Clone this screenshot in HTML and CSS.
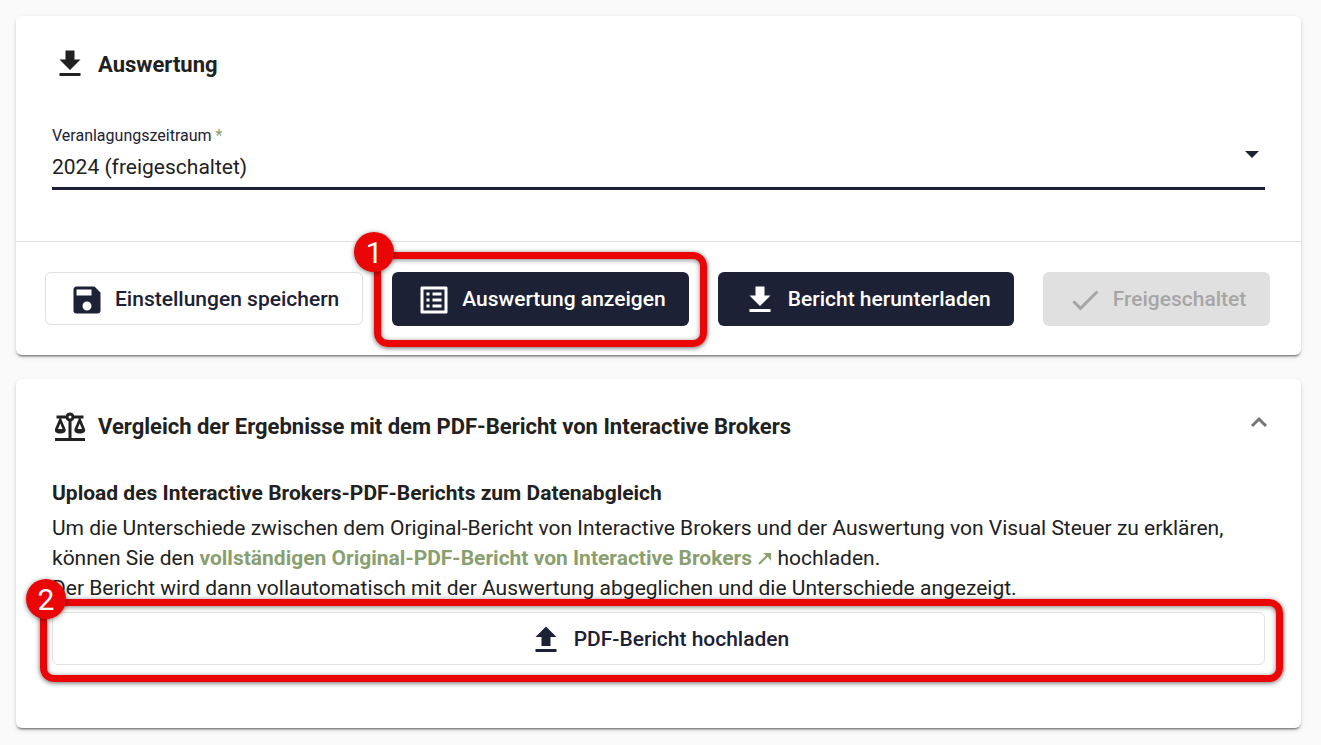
FILE: index.html
```html
<!DOCTYPE html>
<html lang="de">

<head>
    <meta charset="UTF-8">
    <meta name="viewport" content="width=device-width, initial-scale=1.0">
    <title>Auswertung</title>
    <link rel="stylesheet" href="styles.css">
</head>

<body>
    <main class="page">
        <section class="card">
            <div class="card-header">
                <svg class="icon" viewBox="0 0 24 24"><path d="M5,20H19V18H5M19,9H15V3H9V9H5L12,16L19,9Z"/></svg>
                <h2>Auswertung</h2>
            </div>

            <div class="field">
                <label for="period">Veranlagungszeitraum <span class="required">*</span></label>
                <div class="select-wrap">
                    <select id="period" name="period" required>
                        <option selected>2024 (freigeschaltet)</option>
                    </select>
                    <svg class="select-arrow" viewBox="0 0 14 7"><path d="M0,0H14L7,7Z"/></svg>
                </div>
            </div>

            <div class="actions">
                <button type="button" class="btn btn-outline">
                    <svg class="icon" viewBox="0 0 24 24"><path d="M15,9H5V5H15M12,19A3,3 0 0,1 9,16A3,3 0 0,1 12,13A3,3 0 0,1 15,16A3,3 0 0,1 12,19M17,3H5C3.89,3 3,3.9 3,5V19A2,2 0 0,0 5,21H19A2,2 0 0,0 21,19V7L17,3Z"/></svg>
                    <span>Einstellungen speichern</span>
                </button>
                <div class="step step-show">
                    <button type="button" class="btn btn-dark">
                        <svg class="icon" viewBox="0 0 24 24"><path d="M19 5v14H5V5h14m1.1-2H3.9c-.5 0-.9.4-.9.9v16.2c0 .4.4.9.9.9h16.2c.4 0 .9-.5.9-.9V3.9c0-.5-.5-.9-.9-.9zM11 7h6v2h-6V7zm0 4h6v2h-6v-2zm0 4h6v2h-6zM7 7h2v2H7zm0 4h2v2H7zm0 4h2v2H7z"/></svg>
                        <span>Auswertung anzeigen</span>
                    </button>
                    <div class="marker"></div>
                    <span class="badge">1</span>
                </div>
                <button type="button" class="btn btn-dark">
                    <svg class="icon" viewBox="0 0 24 24"><path d="M5,20H19V18H5M19,9H15V3H9V9H5L12,16L19,9Z"/></svg>
                    <span>Bericht herunterladen</span>
                </button>
                <button type="button" class="btn btn-disabled" disabled>
                    <svg class="icon" viewBox="0 0 24 24"><path d="M21,7L9,19L3.5,13.5L4.91,12.09L9,16.17L19.59,5.59L21,7Z"/></svg>
                    <span>Freigeschaltet</span>
                </button>
            </div>
        </section>

        <section class="card">
            <div class="card-header collapsible">
                <svg class="icon" viewBox="0 0 24 24"><path d="M12,3C10.73,3 9.6,3.8 9.18,5H3V7H4.95L2,14C1.53,16 3,17 5.5,17C8,17 9.56,16 9,14L6.05,7H9.17C9.5,7.85 10.15,8.5 11,8.83V20H2V22H22V20H13V8.82C13.85,8.5 14.5,7.85 14.82,7H17.95L15,14C14.53,16 16,17 18.5,17C21,17 22.56,16 22,14L19.05,7H21V5H14.83C14.4,3.8 13.27,3 12,3M12,5A1,1 0 0,1 13,6A1,1 0 0,1 12,7A1,1 0 0,1 11,6A1,1 0 0,1 12,5M5.5,10.25L7,14H4L5.5,10.25M18.5,10.25L20,14H17L18.5,10.25Z"/></svg>
                <h2>Vergleich der Ergebnisse mit dem PDF-Bericht von Interactive Brokers</h2>
                <button type="button" class="toggle" aria-label="Einklappen">
                    <svg viewBox="0 0 18 12"><path d="M2,10L9,3L16,10"/></svg>
                </button>
            </div>

            <div class="card-body">
                <h3>Upload des Interactive Brokers-PDF-Berichts zum Datenabgleich</h3>
                <p>
                    Um die Unterschiede zwischen dem Original-Bericht von Interactive Brokers und der Auswertung von Visual Steuer zu erklären, können Sie den <a href="#">vollständigen Original-PDF-Bericht von Interactive Brokers
                    <svg class="link-arrow" viewBox="0 0 15 14"><path d="M2,13L11,4"/><path class="head" d="M6,2H14V10L11,6Z"/></svg></a> hochladen.<br>
                    Der Bericht wird dann vollautomatisch mit der Auswertung abgeglichen und die Unterschiede angezeigt.
                </p>
                <div class="step step-upload">
                    <button type="button" class="btn btn-outline btn-wide">
                        <svg class="icon" viewBox="0 0 24 24"><path d="M9,16V10H5L12,3L19,10H15V16H9M5,20V18H19V20H5Z"/></svg>
                        <span>PDF-Bericht hochladen</span>
                    </button>
                    <div class="marker"></div>
                    <span class="badge">2</span>
                </div>
            </div>
        </section>
    </main>
</body>

</html>
```

FILE: styles.css
```css
* {
    box-sizing: border-box;
}

body {
    margin: 0;
    background: #fafafa;
    color: #212121;
    font-family: Roboto, sans-serif;
    font-size: 21px;
    line-height: 30px;
}

.page {
    display: flex;
    flex-direction: column;
    gap: 24px;
    padding: 16px 20px 16px 16px;
}

.card {
    background: white;
    border-radius: 6px;
    box-shadow: 0 3px 2px -2px rgba(0, 0, 0, 0.4), 0 2px 2px rgba(0, 0, 0, 0.14), 0 2px 5px rgba(0, 0, 0, 0.12);
}

.card-header {
    display: flex;
    align-items: center;
    gap: 10px;
    padding: 30px 33px 0 36px;
}

.card-header.collapsible {
    padding-top: 29px;
}

h2 {
    flex: 1;
    margin: 0;
    padding-top: 2px;
    font-size: 22px;
    font-weight: 700;
    line-height: 34px;
}

h3 {
    margin: 0 0 5px;
    font-size: 21px;
    font-weight: 700;
}

p {
    margin: 0 0 9px;
}

a {
    color: #8a9f70;
    font-weight: 700;
    text-decoration: none;
}

.icon {
    width: 36px;
    height: 36px;
    flex: none;
    fill: currentColor;
}

.link-arrow {
    width: 15px;
    height: 14px;
    fill: none;
    stroke: #8a9f70;
    stroke-width: 2;
}

.link-arrow .head {
    fill: #8a9f70;
    stroke: none;
}

/* select field */
.field {
    padding: 43px 36px 51px;
}

.field label {
    display: block;
    color: #1c2136;
    font-size: 16px;
    line-height: 22px;
}

.required {
    color: #8a9f70;
}

.select-wrap {
    position: relative;
    border-bottom: 3px solid #1c2136;
}

select {
    display: block;
    width: 100%;
    height: 40px;
    padding: 0;
    border: none;
    background: none;
    color: #212121;
    font: inherit;
    appearance: none;
}

.select-arrow {
    position: absolute;
    top: 4px;
    right: 6px;
    width: 14px;
    height: 7px;
    fill: #1c2136;
    pointer-events: none;
}

/* buttons */
.actions {
    display: flex;
    align-items: flex-start;
    gap: 29px;
    padding: 30px 29px 29px;
    border-top: 1px solid #e0e0e0;
}

.btn {
    display: flex;
    align-items: center;
    justify-content: center;
    gap: 10px;
    height: 54px;
    padding: 0 24px;
    border: none;
    border-radius: 6px;
    font: inherit;
    font-weight: 500;
    white-space: nowrap;
    cursor: pointer;
}

.btn .icon {
    margin-top: 2px;
}

.btn-outline {
    height: 53px;
    padding: 0 23px;
    border: 1px solid #e0e0e0;
    background: white;
    color: #1c2136;
}

.btn-dark {
    padding-right: 23px;
    background: #1c2136;
    color: white;
}

.btn-disabled {
    background: #e0e0e0;
    color: #a6a6a6;
    cursor: default;
}

.btn-wide {
    width: 100%;
}

.toggle {
    display: flex;
    padding: 0 0 8px;
    border: none;
    background: none;
    cursor: pointer;
}

.toggle svg {
    width: 18px;
    height: 12px;
    fill: none;
    stroke: #757575;
    stroke-width: 3;
}

.card-body {
    padding: 34px 36px 63px;
}

/* numbered step markers */
.step {
    position: relative;
}

.marker {
    position: absolute;
    border: 7px solid #ea0606;
    border-radius: 14px;
    box-shadow: 0 1px 5px rgba(0, 0, 0, 0.6), inset 0 1px 5px rgba(0, 0, 0, 0.5);
    pointer-events: none;
}

.badge {
    position: absolute;
    width: 40px;
    height: 40px;
    border-radius: 50%;
    background: #ea0606;
    box-shadow: 0 1px 5px rgba(0, 0, 0, 0.5);
    color: white;
    font-size: 30px;
    line-height: 42px;
    text-align: center;
}

.step-show .marker {
    inset: -20px -18px -21px;
}

.step-show .badge {
    top: -40px;
    left: -38px;
}

.step-upload .marker {
    inset: -13px -18px -17px -12px;
}

.step-upload .badge {
    top: -33px;
    left: -26px;
}
```
